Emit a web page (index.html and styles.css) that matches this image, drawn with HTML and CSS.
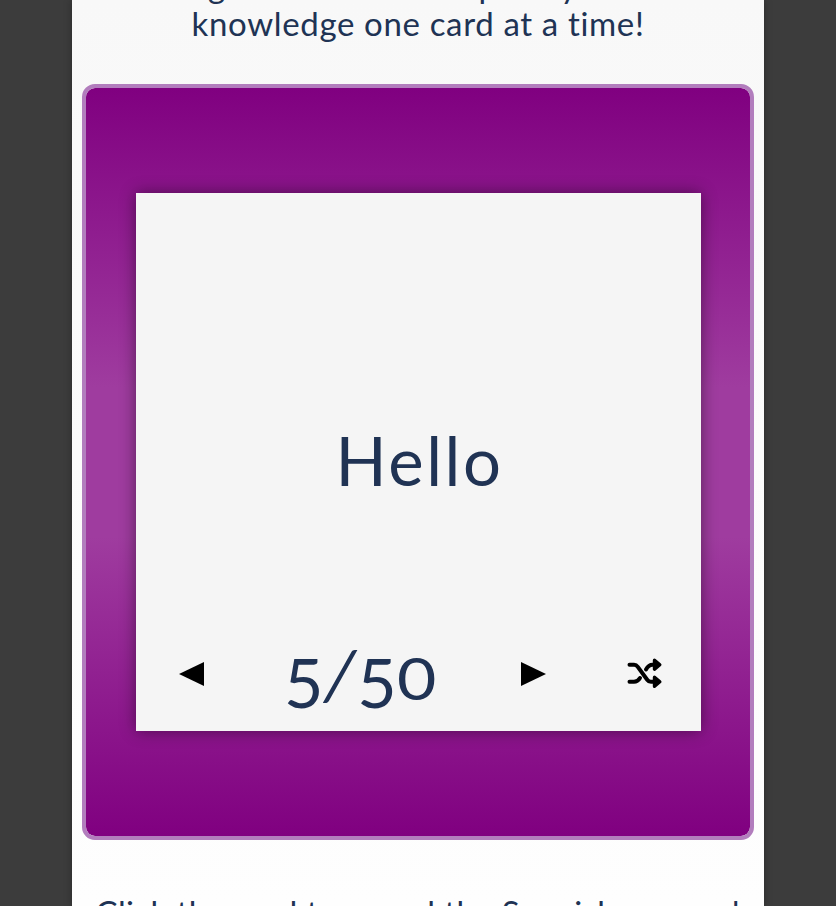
FILE: index.html
```html
<!DOCTYPE html>
<html lang="en">
<head>
<meta charset="utf-8">
<title>Flashcards</title>
<link rel="stylesheet" href="styles.css">
</head>
<body>
<main class="page">
  <p class="intro"><span class="line first">great cards and expand your</span><span class="line second">knowledge one card at a time!</span></p>
  <section class="deck">
    <article class="card">
      <h1 class="word"><span>Hello</span></h1>
      <div class="controls">
        <svg class="arrow" viewBox="0 0 25 26"><path d="M0 13 25 1V25Z"/></svg>
        <div class="count"><span class="low">5</span><span class="slash">/</span><span class="low">5</span><span class="zero">0</span></div>
        <svg class="arrow next" viewBox="0 0 25 26"><path d="M0 1 25 13 0 25Z"/></svg>
        <svg class="shuffle" viewBox="0 0 36 32">
          <path class="stroke" d="M2.5 6.7H7Q9.3 6.7 10.8 8.8L20.2 21.7Q21.7 23.8 24 23.8H28M2.5 23.8H7C10 23.8 11.5 22.5 13 20M19 11.5C20.8 8.2 22 6.7 25.5 6.7H28"/>
          <path class="head" d="M27.5 2.2 32.8 6.7 27.5 11.2ZM27.5 19.3 32.8 23.8 27.5 28.3Z"/>
        </svg>
      </div>
    </article>
  </section>
  <p class="hint">Click the card to reveal the Spanish answer!</p>
</main>
</body>
</html>
```
FILE: styles.css
```css
* { box-sizing: border-box; }
body {
  margin: 0;
  height: 906px;
  overflow: hidden;
  background: #3c3c3c;
  color: #203354;
  font-family: Lato, "Open Sans", sans-serif;
}
.page {
  width: 692px;
  height: 906px;
  margin-left: 72px;
  padding: 0 10px;
  overflow: hidden;
  background: linear-gradient(#f8f8f8, #fefefe);
  box-shadow: 0 0 8px rgba(0, 0, 0, .3);
}
.intro, .hint {
  margin: 0;
  font-size: 33px;
  line-height: 38px;
  text-align: center;
  white-space: nowrap;
}
.intro { display: flow-root; height: 84px; }
.line { display: block; }
.first {
  margin-top: -34px;
  padding-left: 126px;
  text-align: left;
  letter-spacing: .45px;
}
.second { letter-spacing: .65px; }
.deck {
  height: 756px;
  padding: 105px 49px 0 50px;
  border: 4px solid #b27dbd;
  border-radius: 13px;
  background: linear-gradient(#800080 0%, #9f3c9f 40%, #9f3c9f 60%, #800080 100%) padding-box;
}
.card {
  display: flex;
  flex-direction: column;
  height: 538px;
  background: #f5f5f5;
  box-shadow: 0 0 15px rgba(0, 0, 0, .45);
}
.word {
  margin: 0;
  padding-top: 226px;
  height: 437px;
  font-size: 67px;
  font-weight: 400;
  line-height: 82px;
  letter-spacing: 2.6px;
  text-indent: 2px;
  text-align: center;
}
.controls {
  display: flex;
  align-items: center;
  height: 88px;
  padding-left: 43px;
}
.arrow { width: 25px; height: 26px; }
.count {
  display: flex;
  align-items: baseline;
  width: 152px;
  height: 88px;
  margin-left: 80px;
  font-size: 68px;
  line-height: 88px;
}
.low { position: relative; top: 8px; }
.slash { margin: 0 2px 0 1px; transform: translateX(1px) skewX(-9deg); }
.zero { font-size: 58px; transform: scaleX(1.17); transform-origin: left; }
.next { margin-left: 85px; }
.shuffle { width: 36px; height: 32px; margin-left: 81px; }
.stroke { fill: none; stroke: #000; stroke-width: 4; stroke-linecap: round; }
.head { stroke: #000; stroke-width: 3.4; stroke-linejoin: round; }
.hint { margin-top: 53px; letter-spacing: .38px; }
```
